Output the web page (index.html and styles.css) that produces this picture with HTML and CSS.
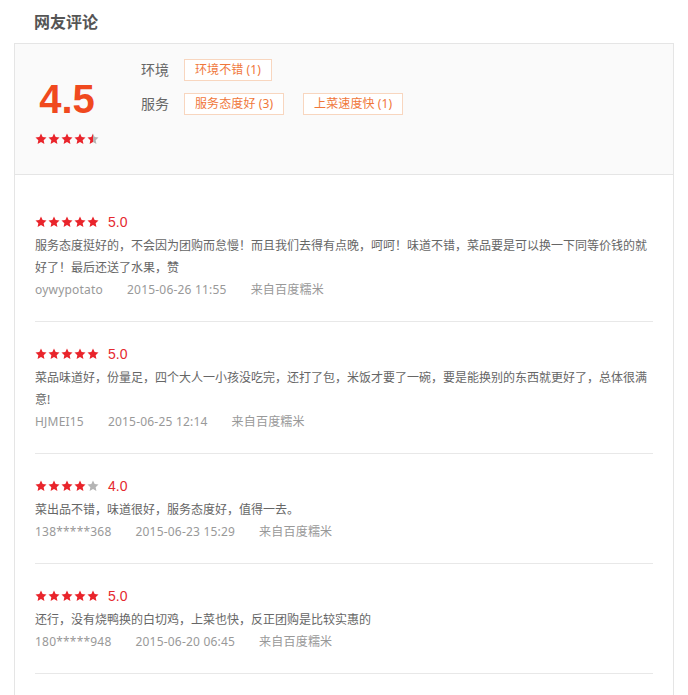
FILE: index.html
```html
<!DOCTYPE html>
<html lang="zh-CN">
<head>
    <meta charset="UTF-8">
    <meta name="viewport" content="width=device-width, initial-scale=1.0">
    <title>网友评论</title>
    <link rel="stylesheet" href="styles.css">
</head>
<body>
    <svg class="defs" width="0" height="0">
        <defs>
            <linearGradient id="half">
                <stop offset="50%" stop-color="#e9242b"/>
                <stop offset="50%" stop-color="#b4b4b4"/>
            </linearGradient>
        </defs>
        <symbol id="star" viewBox="0 0 24 24">
            <path d="M12 1l3.3 7.1 7.7.9-5.7 5.3 1.5 7.7L12 18.2 5.2 22l1.5-7.7L1 9l7.7-.9z"/>
        </symbol>
    </svg>

    <div class="page">
        <h2 class="title">网友评论</h2>

        <div class="box">
            <!-- Summary -->
            <div class="summary">
                <div class="score-col">
                    <div class="big-score">4.5</div>
                    <svg class="stars" width="64" height="12" viewBox="0 0 64 12">
                        <use href="#star" x="0" width="12" height="12" fill="#e9242b"/>
                        <use href="#star" x="13" width="12" height="12" fill="#e9242b"/>
                        <use href="#star" x="26" width="12" height="12" fill="#e9242b"/>
                        <use href="#star" x="39" width="12" height="12" fill="#e9242b"/>
                        <use href="#star" x="52" width="12" height="12" fill="url(#half)"/>
                    </svg>
                </div>
                <div class="tags-col">
                    <div class="tag-row">
                        <span class="label">环境</span>
                        <span class="tag">环境不错 (1)</span>
                    </div>
                    <div class="tag-row">
                        <span class="label">服务</span>
                        <span class="tag">服务态度好 (3)</span>
                        <span class="tag">上菜速度快 (1)</span>
                    </div>
                </div>
            </div>

            <!-- Reviews -->
            <div class="list">
                <div class="item">
                    <div class="item-head">
                        <svg class="stars" width="64" height="12" viewBox="0 0 64 12">
                            <use href="#star" x="0" width="12" height="12" fill="#e9242b"/>
                            <use href="#star" x="13" width="12" height="12" fill="#e9242b"/>
                            <use href="#star" x="26" width="12" height="12" fill="#e9242b"/>
                            <use href="#star" x="39" width="12" height="12" fill="#e9242b"/>
                            <use href="#star" x="52" width="12" height="12" fill="#e9242b"/>
                        </svg>
                        <span class="score">5.0</span>
                    </div>
                    <p class="text">服务态度挺好的，不会因为团购而怠慢！而且我们去得有点晚，呵呵！味道不错，菜品要是可以换一下同等价钱的就好了！最后还送了水果，赞</p>
                    <div class="meta">
                        <span>oywypotato</span>
                        <span>2015-06-26 11:55</span>
                        <span>来自百度糯米</span>
                    </div>
                </div>

                <div class="item">
                    <div class="item-head">
                        <svg class="stars" width="64" height="12" viewBox="0 0 64 12">
                            <use href="#star" x="0" width="12" height="12" fill="#e9242b"/>
                            <use href="#star" x="13" width="12" height="12" fill="#e9242b"/>
                            <use href="#star" x="26" width="12" height="12" fill="#e9242b"/>
                            <use href="#star" x="39" width="12" height="12" fill="#e9242b"/>
                            <use href="#star" x="52" width="12" height="12" fill="#e9242b"/>
                        </svg>
                        <span class="score">5.0</span>
                    </div>
                    <p class="text">菜品味道好，份量足，四个大人一小孩没吃完，还打了包，米饭才要了一碗，要是能换别的东西就更好了，总体很满意!</p>
                    <div class="meta">
                        <span>HJMEI15</span>
                        <span>2015-06-25 12:14</span>
                        <span>来自百度糯米</span>
                    </div>
                </div>

                <div class="item">
                    <div class="item-head">
                        <svg class="stars" width="64" height="12" viewBox="0 0 64 12">
                            <use href="#star" x="0" width="12" height="12" fill="#e9242b"/>
                            <use href="#star" x="13" width="12" height="12" fill="#e9242b"/>
                            <use href="#star" x="26" width="12" height="12" fill="#e9242b"/>
                            <use href="#star" x="39" width="12" height="12" fill="#e9242b"/>
                            <use href="#star" x="52" width="12" height="12" fill="#b4b4b4"/>
                        </svg>
                        <span class="score">4.0</span>
                    </div>
                    <p class="text">菜出品不错，味道很好，服务态度好，值得一去。</p>
                    <div class="meta">
                        <span>138*****368</span>
                        <span>2015-06-23 15:29</span>
                        <span>来自百度糯米</span>
                    </div>
                </div>

                <div class="item">
                    <div class="item-head">
                        <svg class="stars" width="64" height="12" viewBox="0 0 64 12">
                            <use href="#star" x="0" width="12" height="12" fill="#e9242b"/>
                            <use href="#star" x="13" width="12" height="12" fill="#e9242b"/>
                            <use href="#star" x="26" width="12" height="12" fill="#e9242b"/>
                            <use href="#star" x="39" width="12" height="12" fill="#e9242b"/>
                            <use href="#star" x="52" width="12" height="12" fill="#e9242b"/>
                        </svg>
                        <span class="score">5.0</span>
                    </div>
                    <p class="text">还行，没有烧鸭换的白切鸡，上菜也快，反正团购是比较实惠的</p>
                    <div class="meta">
                        <span>180*****948</span>
                        <span>2015-06-20 06:45</span>
                        <span>来自百度糯米</span>
                    </div>
                </div>
            </div>
        </div>
    </div>
</body>
</html>
```

FILE: styles.css
```css
/* Review block */
body {
    margin: 0;
    background: #fff;
    font-family: "Noto Sans", "Noto Sans CJK SC", sans-serif;
    color: #666;
}

.defs {
    position: absolute;
    width: 0;
    height: 0;
}

.page {
    margin: 0 14px;
}

.title {
    margin: 10px 0 9px;
    padding-left: 20px;
    font-size: 16px;
    line-height: 24px;
    font-weight: bold;
    color: #555;
}

.box {
    border: 1px solid #e5e5e5;
    border-bottom: none;
}

.stars {
    display: block;
}

/* Summary */
.summary {
    display: flex;
    padding: 15px 20px 29px;
    background: #fafafa;
    border-bottom: 1px solid #e5e5e5;
}

.score-col {
    width: 64px;
    margin-top: 16px;
    text-align: center;
}

.big-score {
    font-family: "Liberation Sans", Arial, sans-serif;
    font-size: 40px;
    line-height: 48px;
    font-weight: bold;
    color: #f0491e;
}

.score-col .stars {
    margin-top: 10px;
}

.tags-col {
    margin-left: 42px;
    display: flex;
    flex-direction: column;
    gap: 12px;
}

.tag-row {
    display: flex;
    align-items: center;
    gap: 19px;
}

.label {
    width: 28px;
    margin-right: -4px;
    font-size: 14px;
    line-height: 22px;
    color: #666;
}

.tag {
    box-sizing: border-box;
    height: 22px;
    padding: 0 10px;
    border: 1px solid #f8d6bf;
    background: #fff;
    font-size: 12px;
    line-height: 20px;
    letter-spacing: 0.1px;
    color: #f0773a;
}

/* Reviews */
.list {
    padding: 15px 20px 21px;
}

.item {
    padding: 21px 0 20px;
    border-bottom: 1px solid #e8e8e8;
}

.item-head {
    display: flex;
    align-items: center;
    height: 22px;
}

.score {
    margin-left: 9px;
    font-family: "Liberation Sans", Arial, sans-serif;
    font-size: 14px;
    line-height: 22px;
    color: #e5292f;
}

.text {
    margin: 2px 0 0;
    font-size: 12px;
    line-height: 22px;
    color: #666;
}

.meta {
    display: flex;
    gap: 24px;
    font-size: 12px;
    line-height: 22px;
    letter-spacing: 0.2px;
    color: #999;
}
```
